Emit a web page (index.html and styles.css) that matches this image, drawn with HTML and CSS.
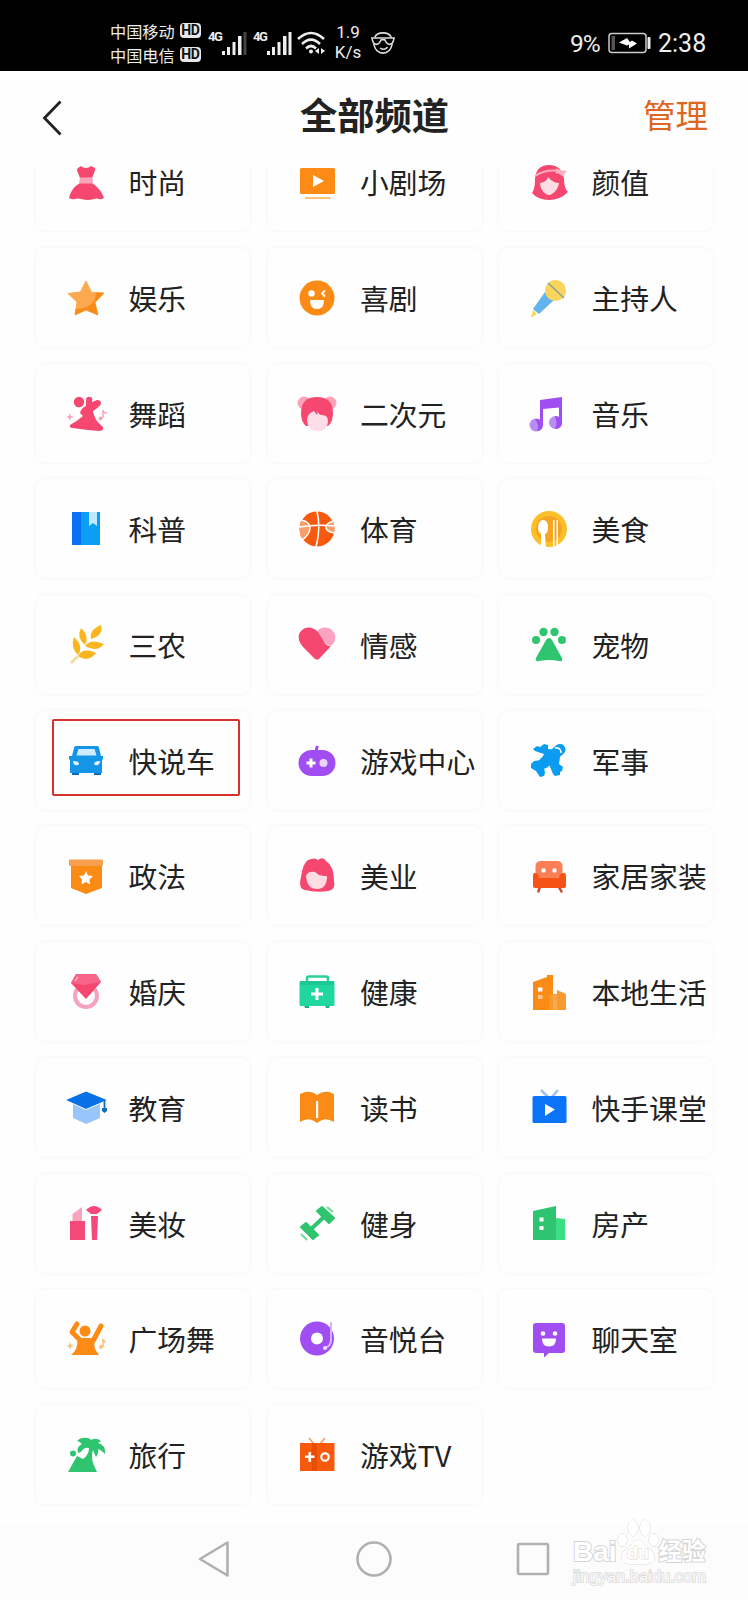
FILE: index.html
```html
<!DOCTYPE html>
<html lang="zh">
<head>
    <meta charset="UTF-8">
    <title>全部频道</title>
    <link rel="stylesheet" href="styles.css">
</head>
<body>
<div class="status">
    <div class="carrier">
        <div>中国移动<b>HD</b></div>
        <div>中国电信<b>HD</b></div>
    </div>
    <div class="signal">
        <span>4G</span>
        <svg width="25" height="24"><path fill="#eee" d="M0 20h3v4H0zM5 16h3v8H5zM10.500 11h3v13h-3zM16 5h3.500v19H16z"/><path fill="#444" d="M21.500 1h3v23h-3z"/></svg>
    </div>
    <div class="signal signal2">
        <span>4G</span>
        <svg width="25" height="24"><path fill="#eee" d="M0 20h3v4H0zM5 16h3v8H5zM10.500 11h3v13h-3zM16 5h3.500v19H16zM21.500 1h3v23h-3z"/></svg>
    </div>
    <svg class="wifi" width="29" height="24" fill="none" stroke="#eee" stroke-width="2.600"><path d="M1 8q13-12 26 0M5 13q9-9 18 0M9 17.500q5-5 10 0"/><circle cx="14" cy="20.500" r="2" fill="#eee" stroke="none"/><path fill="#eee" stroke="none" d="M22 17v6l-4-3zM24 17v6l4-3z"/></svg>
    <div class="speed"><div>1.9</div><div>K/s</div></div>
    <svg class="face" width="24" height="24" viewBox="0 0 26 26" fill="none" stroke="#ddd" stroke-width="1.700"><path d="M4 7Q6 2 13 2t9 5M3 14q2 10 10 10t10-10"/><path d="M1 7.500h24l-1 4q-1 3-4 3t-5-5h-4q-2 5-5 5t-4-3z"/><path d="M10 18.500q4 3 8-1"/></svg>
    <div class="power">9%</div>
    <svg class="battery" width="44" height="22"><rect x="1" y="1.500" width="37" height="19" rx="3" fill="none" stroke="#ccc" stroke-width="1.500"/><path fill="#555" d="M3.500 4H7v14H3.500z"/><path fill="#fff" d="M19 6l3 4 2-1.500 5 3-8 5 0-4-2 1-8-3z"/><rect x="39.500" y="5" width="3" height="12" rx="1" fill="#eee"/></svg>
    <div class="clock">2:38</div>
</div>
<div class="header">
    <svg class="back" width="22" height="38"><path d="M18.500 2.500L2.500 19l16 16.500" fill="none" stroke="#222" stroke-width="2.800"/></svg>
    <h1>全部频道</h1>
    <a class="manage">管理</a>
</div>
<div class="main">
<ul class="list">
    <li>
        <svg viewBox="0 0 40 40"><path fill="#f5476f" d="M12 6l3-2q2 2 5 2t5-2l4 2q1 2-1 5l-2 5H14l-2-5q-2-3 0-5zM14 21h12q9 6 12 15-3 2-5 1t-5 0-6 1-7-1-6 0-6-1q2-10 11-15z"/><path fill="#fba3ba" d="M14 15.500h12.500l.5 6H13z"/></svg>
        <span>时尚</span>
    </li>
    <li>
        <svg viewBox="0 0 40 40"><rect x="3" y="6" width="35" height="26" rx="1.500" fill="#fb8b14"/><path fill="#fff" d="M16 13l11 6-11 6z"/><path fill="#fcc077" d="M8 35h25.500v2H8z"/></svg>
        <span>小剧场</span>
    </li>
    <li>
        <svg viewBox="0 0 40 40"><path fill="#f5476f" d="M6 17Q7 3 20 3t15 14q0 9 4 13-8 8-19 8T3 31q3-4 3-14z"/><path fill="#fddde4" d="M11 21q7-1 8-6 5 6 11 6-1 7-7 11-3 2-6 0-6-4-6-11z"/><path fill="none" stroke="#fdaec0" stroke-width="2" d="M6 14Q16 7 32 9"/><path fill="#fdaec0" d="M27 6l4 2 7 1-3 3 0 3-5-3-4-1 2-2z"/></svg>
        <span>颜值</span>
    </li>
    <li>
        <svg viewBox="0 0 40 40"><path fill="#fba84f" stroke="#fba84f" stroke-linejoin="round" d="M20 3l5.500 11.500 12.500.5-9 9.500L32 37l-12-5-11 5 2-13L2 15.500 14.500 14z"/><path fill="#fa8a1a" d="M30 14.500l8 .5-9 9.500L32 37l-12-5-11 5 1-6q20-1 20-16.500z"/></svg>
        <span>娱乐</span>
    </li>
    <li>
        <svg viewBox="0 0 40 40"><circle cx="20" cy="20" r="17.500" fill="#fb8b14"/><circle cx="14.500" cy="15.500" r="3.200" fill="#fff"/><path fill="#fff" d="M13 22h14q0 9-7 9t-7-9z"/><path fill="none" stroke="#fff" stroke-width="1.800" d="M28 12.500l-3 3 3 3"/></svg>
        <span>喜剧</span>
    </li>
    <li>
        <svg viewBox="0 0 40 40"><path fill="#62b3ee" d="M16 14l9 8L10 36l-6-5z"/><path fill="#f3dc5a" d="M4 32l4 4-6 4z"/><circle cx="26.500" cy="12.500" r="10.500" fill="#fbd55b"/><path fill="none" stroke="#8ba58f" stroke-width="1.600" d="M19 5l16 15"/></svg>
        <span>主持人</span>
    </li>
    <li>
        <svg viewBox="0 0 40 40"><circle cx="13" cy="8" r="5.200" fill="#f5476f"/><path fill="#f5476f" d="M14 19q1-5 6-7l0-7q1-3 4-2 3 0 2 5l5-2q4 0 4 3t-8 8q1 9 10 16 1 4-4 4-14-1-26-3-4 0-3-3 6-3 13-9z"/><path fill="#fba3ba" d="M4 19l1 3 3 1-3 1-1 3-1-3-3-1 3-1z"/><path fill="none" stroke="#fba3ba" stroke-width="1.500" d="M37 24v-8q0 3 4 3"/><circle cx="34.500" cy="24.500" r="2" fill="#fba3ba"/></svg>
        <span>舞蹈</span>
    </li>
    <li>
        <svg viewBox="0 0 40 40"><circle cx="7" cy="9" r="6.500" fill="#fba3ba"/><circle cx="33" cy="9" r="6.500" fill="#fba3ba"/><path fill="#f5476f" d="M4 19Q4 3 20 3t16 16q0 9-5 13H9q-5-4-5-13z"/><path fill="#fddde7" d="M10 25q1-6 7-8l3 4q1-2 0-4 2 4 5 4 6 0 6 6 0 10-10.500 10T10 25z"/></svg>
        <span>二次元</span>
    </li>
    <li>
        <svg viewBox="0 0 40 40"><path fill="#a04df2" d="M11 6l22-3v26h-3V13.500L14 15v16h-3z"/><circle cx="7" cy="31" r="6.500" fill="#b98bf5"/><circle cx="26.500" cy="28.500" r="6.500" fill="#b98bf5"/><path fill="#a04df2" d="M6 25q8-1 8 7-1 5-6 5 3-5-2-12zM26 22q7 0 7 6.500T26 35q3-5 0-13z"/></svg>
        <span>音乐</span>
    </li>
    <li>
        <svg viewBox="0 0 40 40"><path fill="#0a9ff5" d="M6 3h28v33H6z"/><path fill="#0a70f5" d="M6 3h9v33H6z"/><path fill="#c2e8fd" d="M23 3h8v14l-4-3-4 3z"/></svg>
        <span>科普</span>
    </li>
    <li>
        <svg viewBox="0 0 40 40"><circle cx="20" cy="20" r="17.500" fill="#f75a0d"/><path fill="#f9a06a" d="M4 12q7 2 8 7t-7 10q-4-8-1-17zM36 12q-6 3-7 6t8 5q1-5-1-11z"/><path fill="none" stroke="#fff" stroke-width="1.600" d="M20 2q4 17-1 36M2 18q18-3 36-1M4 11q9 2 9 8T5 31M36 12q-8 3-7 7t9 5"/></svg>
        <span>体育</span>
    </li>
    <li>
        <svg viewBox="0 0 40 40"><circle cx="20" cy="20" r="18" fill="#fcbf2a"/><circle cx="20" cy="20" r="13" fill="#f5a51f"/><path fill="#fff" d="M14 11q5 0 5 8 0 5-3 6l1 14h-5l0-14q-3-2-3-7 1-7 5-7zM24 11h1.500v26H24zM27.500 11H29v26h-1.500z"/></svg>
        <span>美食</span>
    </li>
    <li>
        <svg viewBox="0 0 40 40"><g fill="#fbb51f"><path d="M35 0q3 10-10 14-2-9 10-14zM15 3q9 8 4 17-9-7-4-17zM8 12q10 9 4 18-8-7-4-18zM38 19q-7 9-19 2 6-8 19-2zM30 28q-8 10-18 3 5-9 18-3z"/></g><path fill="none" stroke="#f4dc94" stroke-width="2.500" d="M5 38l7-7"/></svg>
        <span>三农</span>
    </li>
    <li>
        <svg viewBox="0 0 40 40"><path fill="#fba3c0" d="M20 6q5-5 12-3 8 4 6 12-1 4-5 6-9-3-13-15z"/><path fill="#f5476f" d="M20 6Q15 1 8 3q-8 4-6 12 1 4 6 9l10 10q2 1 4 0l12-13q-5 1-8-6-3-5-6-9z"/></svg>
        <span>情感</span>
    </li>
    <li>
        <svg viewBox="0 0 40 40"><g fill="#2fc570"><circle cx="7" cy="15" r="4"/><circle cx="14.500" cy="7" r="4.200"/><circle cx="25.500" cy="7" r="4.200"/><circle cx="33" cy="15" r="4"/><path d="M17 15q3-4 6 0l10 18q1 4-3 3-10-2-20 0-4 1-3-3z"/></g></svg>
        <span>宠物</span>
    </li>
    <li class="active">
        <svg viewBox="0 0 40 40"><path fill="#0a6dc0" d="M6 31h7v3H6zM28 31h7v3h-7z"/><path fill="#1495e8" d="M10 5h21q2 0 2 2l2 8h2v3l-1 1v13H4V19l-1-1v-3h3l2-8q0-2 2-2z"/><path fill="#cfecfd" d="M12.500 8h16l2 6.500h-20z"/><path fill="#dff3fe" d="M7 20q6 0 6 3-1 2-4 1-2-1-2-4zM34 20q-6 0-6 3 1 2 4 1 2-1 2-4z"/></svg>
        <span>快说车</span>
    </li>
    <li>
        <svg viewBox="0 0 40 40"><rect x="1.500" y="9" width="37" height="26" rx="13" fill="#a04df2"/><path fill="none" stroke="#a04df2" stroke-width="3" d="M19.500 12V8l1-3"/><path fill="#fff" d="M12.500 17.500h3v3h3v3h-3v3h-3v-3h-3v-3h3z"/><circle cx="26.500" cy="22" r="4" fill="#ead6fd"/></svg>
        <span>游戏中心</span>
    </li>
    <li>
        <svg viewBox="0 0 40 40"><path fill="none" stroke="#0a9cf0" stroke-width="11" stroke-linecap="round" d="M31 8.500L15 22"/><path fill="#0a9cf0" d="M4 8l4-3 3 1 4-3 4 1 0 4 9 1 3 7-1 7 4 3-1 4-2 1 0 3-5 1-2-2-4-10-5 3 1 6-1 3-4 1-4-6-5-3 0-4 3-3 7-1 3-6-9-3z"/><path fill="none" stroke="#fff" stroke-width="1.600" d="M26 7q6-1 6 5"/></svg>
        <span>军事</span>
    </li>
    <li>
        <svg viewBox="0 0 40 40"><path fill="#fb8b14" d="M5 9h31v23l-16 6-15-6z"/><rect x="3" y="3.500" width="34" height="6.500" rx="1" fill="#f9a050"/><path fill="#fff" d="M20 15l2 4.500 5 .5-3.500 3.500L24 28.500 20 26l-4.500 2.500.5-5-3-3.500 5-.5z"/></svg>
        <span>政法</span>
    </li>
    <li>
        <svg viewBox="0 0 40 40"><path fill="#f5476f" d="M11 4q7-3 10 0 5-4 8 1 8 5 8 20 2 9-6 10-11 2-23-1-7-1-4-13Q6 7 11 4z"/><path fill="#fddde2" d="M9 20q2-5 9-4l4 3 5 1h3q0 13-10 13T9 20z"/></svg>
        <span>美业</span>
    </li>
    <li>
        <svg viewBox="0 0 40 40"><path fill="#c9522c" d="M9 32h3l-2 5-2-1zM29 32h3l2 4-2 1z"/><rect x="6.500" y="5" width="27" height="22" rx="5" fill="#fb7f56"/><path fill="#f75216" d="M5 17q5 0 5 5h20q0-5 5-5 2 0 2 3v10q0 2-2 2H6q-2 0-2-2V20q0-3 1-3z"/><rect x="12.500" y="12.500" width="4" height="4" rx="1" fill="#fff"/><rect x="23.500" y="12.500" width="4" height="4" rx="1" fill="#fff"/></svg>
        <span>家居家装</span>
    </li>
    <li>
        <svg viewBox="0 0 40 40"><circle cx="20" cy="24" r="11" fill="none" stroke="#f4a3be" stroke-width="4"/><path fill="#f5476f" d="M10 2h20l5 8-15 17L5 11z"/><path fill="#f7658a" d="M10 2h20l5 8-17 3L5 11z"/><path fill="none" stroke="#fcc" stroke-width="1.200" d="M9 9l3-4"/></svg>
        <span>婚庆</span>
    </li>
    <li>
        <svg viewBox="0 0 40 40"><path fill="none" stroke="#2bcf9b" stroke-width="2.500" d="M10 10V6q0-1.500 2-1.500h17q2 0 2 1.500v4"/><path fill="#19ac7f" d="M7 33h5v3H8zM28 33h5l-1 3h-3z"/><rect x="2.500" y="9" width="35" height="25" rx="1.500" fill="#20d79f"/><path fill="#20c796" d="M3 9h34v4H3z"/><path fill="#fff" d="M18.500 16h3v4.500H26v3h-4.500V28h-3v-4.500H14v-3h4.500z"/></svg>
        <span>健康</span>
    </li>
    <li>
        <svg viewBox="0 0 40 40"><path fill="#fb8b14" d="M4 10l14-5V3h6v35H4z"/><path fill="#f99a2f" d="M20 22h8v-4l9 4v16H20z"/><path fill="#fba94e" d="M24 23h4v15h-4z"/><path fill="#fff" d="M9 15.500h4.500v4H9z"/><path fill="#fcc68b" d="M9 23h4.500v4H9z"/></svg>
        <span>本地生活</span>
    </li>
    <li>
        <svg viewBox="0 0 40 40"><path fill="#98c5fb" d="M7 14l13 6 14-6v16l-14 6-13-6z"/><path fill="#0871e8" stroke="#fff" d="M-1 12L20 3l22 9-22 9.500z"/><path fill="none" stroke="#0871b8" stroke-width="1.800" d="M38.500 13v10"/><path fill="#0871b8" d="M36 20h5v3l-2.500 2L36 23z"/></svg>
        <span>教育</span>
    </li>
    <li>
        <svg viewBox="0 0 40 40"><path fill="#fb8b14" d="M3 6q10-5 17 1 8-6 17-1v28q-8-5-14-1l-3 2-3-2q-6-4-14 1z"/><path fill="#fff" d="M19 13h2.200v17H19z"/></svg>
        <span>读书</span>
    </li>
    <li>
        <svg viewBox="0 0 40 40"><path fill="none" stroke="#9cc2f0" stroke-width="2.500" d="M12 2l7 7M29 2l-6 7"/><rect x="3.500" y="8" width="34" height="27" rx="1.500" fill="#0a73f7"/><path fill="#fff" d="M16 16l10 5.500L16 28z"/></svg>
        <span>快手课堂</span>
    </li>
    <li>
        <svg viewBox="0 0 40 40"><path fill="#f9a3bd" d="M6.500 10l9.500-7v15H6.500z"/><path fill="#f5497b" d="M4 17h15v19H4zM25 12h7l-1 24h-5z"/><path fill="#f5497b" d="M25 10l-5-4q8-8 16 0l-5 4z"/></svg>
        <span>美妆</span>
    </li>
    <li>
        <svg viewBox="0 0 40 40"><path fill="none" stroke="#2fc570" stroke-width="4" d="M12 27l16-15"/><path fill="#2fc570" stroke="#2fc570" stroke-width="2" stroke-linejoin="round" d="M20 7l5-4 12 11-5 5zM4 23l5-4 12 12-5 4z"/><path fill="none" stroke="#76d99f" stroke-width="2.200" d="M30 3l6 5M4 30l6 6"/></svg>
        <span>健身</span>
    </li>
    <li>
        <svg viewBox="0 0 40 40"><path fill="#3ae083" d="M27 14l9 1v21h-9z"/><path fill="#2fc570" d="M4 7l23-5v34H4z"/><path fill="#fff" d="M10.500 13.500h4v4h-4zM10.500 22h4v4h-4z"/></svg>
        <span>房产</span>
    </li>
    <li>
        <svg viewBox="0 0 40 40"><circle cx="19" cy="12" r="5.500" fill="#fb8b14"/><path fill="none" stroke="#fb8b14" stroke-width="5" stroke-linecap="round" stroke-linejoin="round" d="M11 5l-5 8 9 9M35 7l-8 15"/><path fill="#fb8b14" d="M11 19h18q-3 9 4 17H5q8-6 6-17z"/><path fill="#fcc077" d="M4 23l1 3 3 1-3 1-1 3-1-3-3-1 3-1z"/><path fill="none" stroke="#fcc077" stroke-width="1.500" d="M37 28v-8q1 3 3 3"/><circle cx="35" cy="28" r="2" fill="#fcc077"/></svg>
        <span>广场舞</span>
    </li>
    <li>
        <svg viewBox="0 0 40 40"><circle cx="20" cy="19.500" r="17" fill="#a04df2"/><circle cx="20" cy="19.500" r="6" fill="#fff"/><path fill="none" stroke="#d4b4f8" stroke-width="2" d="M34 3v18q0 6-6 8"/><circle cx="28" cy="29" r="2" fill="#ecdcfc"/></svg>
        <span>音悦台</span>
    </li>
    <li>
        <svg viewBox="0 0 40 40"><path fill="#a04df2" d="M7 4h26q3 0 3 3v24q0 3-3 3H20l-5 4.500V34H7q-3 0-3-3V7q0-3 3-3z"/><circle cx="14" cy="14.500" r="2.300" fill="#fff"/><circle cx="26" cy="14.500" r="2.300" fill="#fff"/><path fill="#fff" d="M13 19.500h14q0 8-7 8t-7-8z"/></svg>
        <span>聊天室</span>
    </li>
    <li>
        <svg viewBox="0 0 40 40"><path fill="#2fc570" d="M23 13q-5-1-8 4l-3 1q-2-6 4-9-3-3-5-3 4-4 10-3 3 0 4 2 5-3 10 1l-3 2q8 2 7 11-2-3-7-5 1 4-2 8-2-4-3-7-2 6 0 13 2 5 4 9H2l9-16 6 3q6-4 6-11z"/><circle cx="7" cy="18.500" r="3" fill="#2fc570"/></svg>
        <span>旅行</span>
    </li>
    <li>
        <svg viewBox="0 0 40 40"><path fill="none" stroke="#f9a06a" stroke-width="1.800" d="M12 3l5 6M28 3l-5 6"/><path fill="#f75a0d" d="M3 8h34.500v28H3z"/><path fill="#e94d05" d="M15 8h5v28h-5z"/><path fill="#fff" d="M11.500 17h2.500v3.500h3.500V23H14v4h-2.500v-4H8v-2.500h3.500z"/><circle cx="28" cy="22" r="3.700" fill="none" stroke="#fff" stroke-width="2.200"/></svg>
        <span>游戏TV</span>
    </li>
</ul>
</div>
<div class="nav">
    <svg width="32" height="38"><path d="M29.500 2.500v33L2 19z"/></svg>
    <svg width="38" height="38"><circle cx="19" cy="19" r="16.500"/></svg>
    <svg width="34" height="34"><rect x="2" y="2" width="30" height="30" rx="1.500"/></svg>
    <div class="mark">
        <div class="brand">
            <span>Bai</span>
            <svg width="42" height="46" viewBox="0 0 42 46"><ellipse cx="16" cy="9" rx="5" ry="8"/><ellipse cx="28" cy="9" rx="5" ry="8"/><ellipse cx="5.500" cy="21" rx="4.500" ry="6.500"/><ellipse cx="36.500" cy="21" rx="4.500" ry="6.500"/><path d="M14 26q7-10 14 0l8 7q5 11-7 12H13Q1 44 6 33z"/><text x="21" y="40" text-anchor="middle">du</text></svg>
            <span class="cn">经验</span>
        </div>
        <div class="url">jingyan.baidu.com</div>
    </div>
</div>
</body>
</html>
```
FILE: styles.css
```css
* {
    margin: 0;
    padding: 0;
    box-sizing: border-box;
}
body {
    width: 748px;
    height: 1600px;
    overflow: hidden;
    background: #fefefe;
    color: #222;
    font-family: "Noto Sans CJK SC", sans-serif;
}
ul {
    list-style: none;
}
svg {
    display: block;
    flex: none;
    overflow: visible;
}

/* 状态栏 */
.status {
    height: 70.500px;
    padding: 15px 0 0 110px;
    display: flex;
    align-items: center;
    background: #000;
    color: #eee;
    font-family: Roboto, "Noto Sans CJK SC", sans-serif;
}
.carrier {
    width: 98px;
    font-size: 16.2px;
}
.carrier div {
    height: 24px;
    display: flex;
    align-items: center;
}
.carrier b {
    width: 21px;
    height: 15px;
    margin-left: 5px;
    border-radius: 4px;
    background: #e8e8e8;
    color: #111;
    font-size: 14px;
    line-height: 15px;
    letter-spacing: -.5px;
    text-align: center;
}
.signal {
    width: 38px;
    display: flex;
}
.signal span {
    width: 14px;
    flex: none;
    font: bold 13px/12px "Roboto";
    letter-spacing: -1.500px;
}
.signal2 {
    margin-left: 7px;
}
.wifi {
    margin-left: 6px;
}
.speed {
    width: 30px;
    margin-left: 7px;
    font-size: 17px;
    line-height: 19.500px;
    text-align: center;
}
.face {
    margin-left: 8px;
}
.power {
    width: 38px;
    margin-left: 175px;
    padding-top: 2px;
    font-size: 24.500px;
    letter-spacing: -1px;
}
.clock {
    margin-left: 6px;
    padding-top: 2px;
    font-size: 25px;
    letter-spacing: 0;
}

/* 标题 */
.header {
    height: 94.500px;
    padding: 0 40px 8px 42px;
    display: flex;
    align-items: center;
    justify-content: space-between;
}
.header h1 {
    margin-left: 42px;
    font-size: 37.300px;
    line-height: 54px;
}
.back {
    margin-top: 9px;
}
.manage {
    font-size: 32.500px;
    line-height: 48px;
    color: #e0651f;
}

/* 频道列表 */
.main {
    height: 1361px;
    overflow: hidden;
}
.list {
    margin: -32.700px 36px 0;
    width: 677px;
    display: grid;
    grid-template-columns: repeat(3, 214px);
    grid-auto-rows: 99px;
    gap: 16.700px 17.500px;
}
.list li {
    position: relative;
    padding: 1px 0 0 29.500px;
    display: flex;
    align-items: center;
    gap: 23px;
    border-radius: 9px;
    box-shadow: 0 0 4px -1px rgba(0, 0, 0, .08);
    font-size: 28.800px;
    line-height: 32px;
    white-space: nowrap;
}
.list li svg {
    width: 40px;
    height: 40px;
}
.list .active:after {
    content: "";
    position: absolute;
    left: 16px;
    top: 8px;
    width: 184px;
    height: 73px;
    border: 2px solid #d3332b;
    border-radius: 2px;
}

/* 底部导航 */
.nav {
    height: 74px;
    padding: 0 41px 8px 198px;
    display: flex;
    align-items: center;
    background: #fcfcfc;
}
.nav > svg {
    fill: none;
    stroke: #b0b0b0;
    stroke-width: 2.600;
    stroke-linejoin: round;
}
.nav > svg:nth-child(2) {
    margin-left: 125px;
}
.nav > svg:nth-child(3) {
    margin-left: 123px;
}
.mark {
    margin: -14px 0 0 23px;
    color: #fff;
    -webkit-text-stroke: 2px #d5d5d5;
    paint-order: stroke fill;
    font-family: "Liberation Sans", "Noto Sans CJK SC", sans-serif;
}
.brand {
    height: 46px;
    display: flex;
    align-items: flex-end;
    font-size: 28px;
    line-height: 26px;
    font-weight: bold;
}
.brand .cn {
    font-size: 23.500px;
}
.brand svg {
    fill: #fff;
    stroke: #d5d5d5;
}
.brand text {
    font-size: 18px;
}
.url {
    height: 20px;
    color: #fafafa;
    font-size: 16.500px;
    line-height: 23px;
    -webkit-text-stroke: 1.500px #d8d8d8;
}
```
